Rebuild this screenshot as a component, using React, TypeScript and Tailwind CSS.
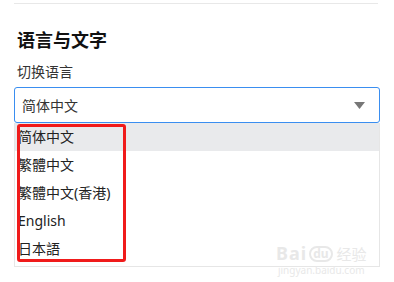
import React from "react";

const items = ["简体中文", "繁體中文", "繁體中文(香港)", "English", "日本語"];

export default function App() {
  return (
    <div
      className="relative w-[394px] h-[282px] bg-white overflow-hidden text-[#222]"
      style={{ fontFamily: '"Noto Sans", "Noto Sans CJK SC", sans-serif' }}
    >
      <div className="ml-[14px] w-[364px] mt-[3px] border-t border-[#e8e8e8]" />
      <div className="pl-[14px] w-[380px]">
        <div className="mt-[24px] pl-[3px] h-[24px] leading-[24px] text-[18px] font-bold text-[#111]">
          语言与文字
        </div>
        <div className="mt-[10px] pl-[3px] h-[20px] leading-[20px] text-[14px] text-[#333]">
          切换语言
        </div>
        <div className="mt-[5px] h-[36px] flex items-center justify-between border border-[#3a8ef0] rounded-[3px] pl-[7px] pr-[14px] text-[14px] text-[#333]">
          <span>简体中文</span>
          <svg width="11" height="7" viewBox="0 0 11 7">
            <path d="M0 0 H11 L5.5 7 Z" fill="#777" />
          </svg>
        </div>
        <div className="border border-t-0 border-[#e6e6e6] pb-[3px]">
          {items.map((t, i) => (
            <div
              key={t}
              className={`h-[28px] leading-[28px] pl-[3px] text-[14px] text-[#222] ${i === 0 ? "bg-[#e9eaec]" : ""}`}
            >
              {t}
            </div>
          ))}
        </div>
      </div>
      <div className="absolute left-[17px] top-[124px] w-[109px] h-[138px] border-[3px] border-[#f01b1b] rounded-[3px]" />
      <div className="absolute left-[276px] top-[244px] flex flex-col items-center text-[#e8e8e8] select-none">
        <div className="flex items-end gap-[2px] leading-none">
          <span className="text-[18px] font-bold tracking-[1px]">Bai</span>
          <span className="text-[12px] font-bold border-[2px] border-[#e8e8e8] rounded-full px-[2px]">du</span>
          <span className="text-[15px] ml-[2px]">经验</span>
        </div>
        <div className="text-[10px] leading-[12px] mt-[2px]">jingyan.baidu.com</div>
      </div>
    </div>
  );
}
